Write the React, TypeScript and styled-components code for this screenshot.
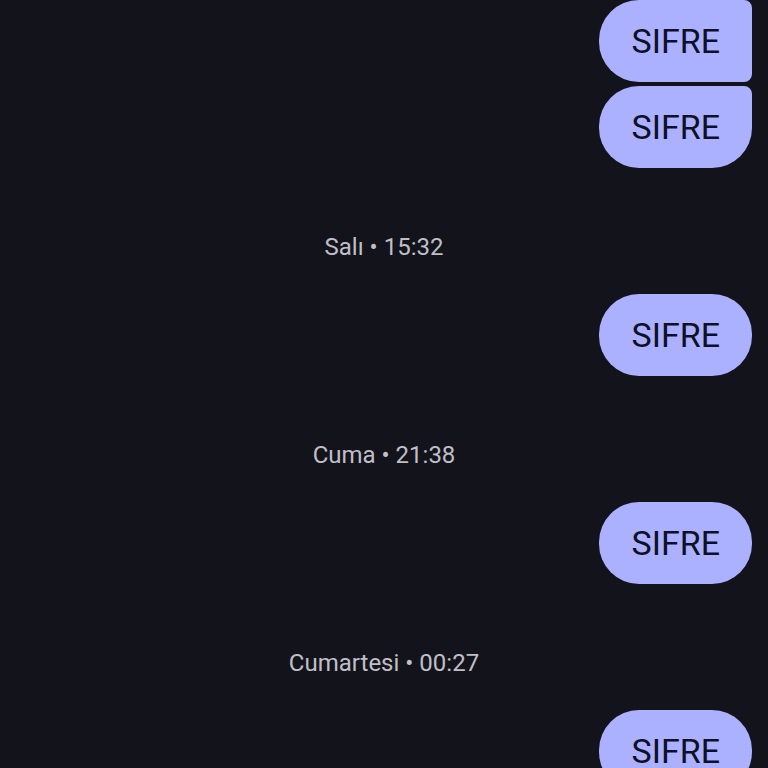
import styled, { createGlobalStyle } from 'styled-components';

interface IMessageGroup {
  day?: string;
  time?: string;
  messages: string[];
}

interface IBubbleProps {
  $joinsNext: boolean;
  $joinsPrevious: boolean;
}

const GlobalStyle = createGlobalStyle`
  * {
    box-sizing: border-box;
  }

  html,
  body {
    height: 100%;
    margin: 0;
  }

  body {
    background: #13141b;
    overflow: hidden;
  }

  #root {
    height: 100%;
  }
`;

const Conversation = styled.main`
  height: 100%;
  overflow: hidden;
  padding: 0 16px;
  font-family: Roboto, 'Liberation Sans', sans-serif;
`;

const Timestamp = styled.h2`
  margin: 64px 0 32px;
  color: #c0bfc9;
  font-size: 24px;
  font-weight: 400;
  line-height: 30px;
  text-align: center;
`;

const MessageList = styled.ul`
  display: flex;
  flex-direction: column;
  align-items: flex-end;
  gap: 4px;
  margin: 0;
  padding: 0;
  list-style: none;
`;

const Bubble = styled.li<IBubbleProps>`
  padding: 20px 32px;
  border-radius: 40px;
  border-top-right-radius: ${(props) => (props.$joinsPrevious ? 8 : 40)}px;
  border-bottom-right-radius: ${(props) => (props.$joinsNext ? 8 : 40)}px;
  background: #acb1ff;
  color: #0d1026;
  font-size: 34px;
  line-height: 42px;
`;

const groups: IMessageGroup[] = [
  { messages: ['SIFRE', 'SIFRE'] },
  { day: 'Salı', time: '15:32', messages: ['SIFRE'] },
  { day: 'Cuma', time: '21:38', messages: ['SIFRE'] },
  { day: 'Cumartesi', time: '00:27', messages: ['SIFRE'] },
];

function MessageGroup({ day, time, messages }: IMessageGroup) {
  return (
    <section>
      {day && (
        <Timestamp>
          {day} • {time}
        </Timestamp>
      )}
      <MessageList>
        {messages.map((message, index) => (
          <Bubble
            key={index}
            $joinsPrevious={!day || index > 0}
            $joinsNext={index < messages.length - 1}
          >
            {message}
          </Bubble>
        ))}
      </MessageList>
    </section>
  );
}

export default function App() {
  return (
    <>
      <GlobalStyle />
      <Conversation>
        {groups.map((group, index) => (
          <MessageGroup key={index} {...group} />
        ))}
      </Conversation>
    </>
  );
}
